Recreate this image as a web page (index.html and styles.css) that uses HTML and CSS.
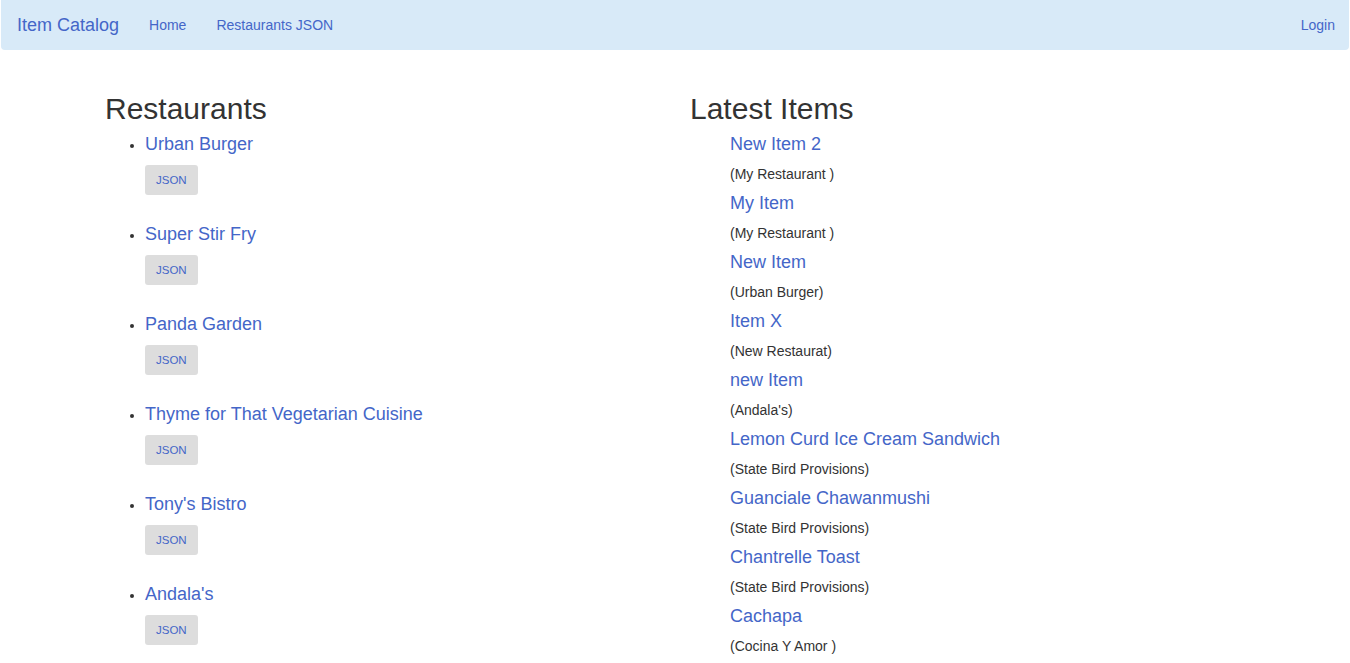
FILE: index.html
```html
<!DOCTYPE html>
<html>
<head>
<meta charset="utf-8">
<link rel="stylesheet" href="styles.css">
</head>
<body>
<nav class="navbar">
  <div class="nav-left">
    <a class="brand" href="#">Item Catalog</a>
    <a class="nav-link" href="#">Home</a>
    <a class="nav-link" href="#">Restaurants JSON</a>
  </div>
  <a class="nav-link login" href="#">Login</a>
</nav>
<div class="container">
  <div class="col">
    <h2>Restaurants</h2>
    <ul class="rest-list">
      <li><a class="item-link" href="#">Urban Burger</a><a class="btn" href="#">JSON</a></li>
      <li><a class="item-link" href="#">Super Stir Fry</a><a class="btn" href="#">JSON</a></li>
      <li><a class="item-link" href="#">Panda Garden</a><a class="btn" href="#">JSON</a></li>
      <li><a class="item-link" href="#">Thyme for That Vegetarian Cuisine</a><a class="btn" href="#">JSON</a></li>
      <li><a class="item-link" href="#">Tony's Bistro</a><a class="btn" href="#">JSON</a></li>
      <li><a class="item-link" href="#">Andala's</a><a class="btn" href="#">JSON</a></li>
    </ul>
  </div>
  <div class="col">
    <h2>Latest Items</h2>
    <ul class="items-list">
      <li><a class="item-link" href="#">New Item 2</a><p class="sub">(My Restaurant )</p></li>
      <li><a class="item-link" href="#">My Item</a><p class="sub">(My Restaurant )</p></li>
      <li><a class="item-link" href="#">New Item</a><p class="sub">(Urban Burger)</p></li>
      <li><a class="item-link" href="#">Item X</a><p class="sub">(New Restaurat)</p></li>
      <li><a class="item-link" href="#">new Item</a><p class="sub">(Andala's)</p></li>
      <li><a class="item-link" href="#">Lemon Curd Ice Cream Sandwich</a><p class="sub">(State Bird Provisions)</p></li>
      <li><a class="item-link" href="#">Guanciale Chawanmushi</a><p class="sub">(State Bird Provisions)</p></li>
      <li><a class="item-link" href="#">Chantrelle Toast</a><p class="sub">(State Bird Provisions)</p></li>
      <li><a class="item-link" href="#">Cachapa</a><p class="sub">(Cocina Y Amor )</p></li>
    </ul>
  </div>
</div>
</body>
</html>
```
FILE: styles.css
```css
* { box-sizing: border-box; }
html, body { margin: 0; padding: 0; }
body {
  font-family: "Liberation Sans", Arial, sans-serif;
  font-size: 14px;
  line-height: 20px;
  color: #333;
  background: #fff;
}
a { color: #4466c8; text-decoration: none; }
.navbar {
  display: flex;
  justify-content: space-between;
  align-items: center;
  height: 50px;
  margin: 0 1px 21px 1px;
  background: #d8eaf8;
  border-radius: 0 0 4px 4px;
  padding: 0 14px 1px 16px;
}
.nav-left { display: flex; align-items: center; }
.brand {
  font-size: 18px;
  line-height: 20px;
  margin-right: 15px;
}
.nav-link {
  font-size: 14px;
  padding: 15px;
  line-height: 20px;
}
.login { padding-right: 0; }
.container {
  width: 1170px;
  margin: 0 auto;
  display: flex;
}
.col {
  width: 585px;
  padding: 0 15px;
}
h2 {
  font-size: 30px;
  font-weight: 500;
  line-height: 33px;
  margin: 21px 0 9px;
}
ul { margin: 0; padding-left: 40px; }
.rest-list li { margin-bottom: 29px; }
.item-link {
  display: block;
  font-size: 18px;
  line-height: 20px;
}
.btn {
  display: inline-block;
  margin-top: 11px;
  background: #ddd;
  border-radius: 3px;
  font-size: 11.5px;
  line-height: 30px;
  padding: 0 11px;
  height: 30px;
}
.items-list { list-style: none; }
.sub {
  margin: 10px 0 9px;
  font-size: 14px;
  line-height: 20px;
}
```
